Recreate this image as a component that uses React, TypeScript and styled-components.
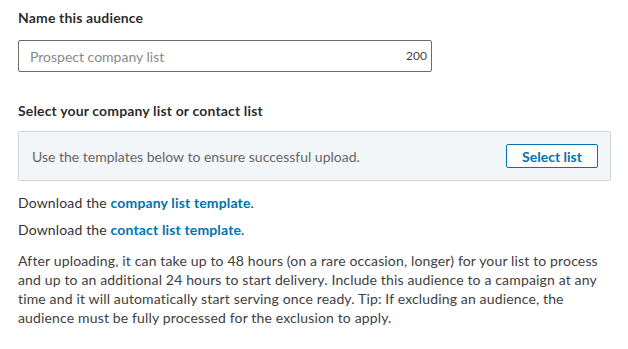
import styled, { createGlobalStyle } from "styled-components";

const GlobalStyle = createGlobalStyle`
  body {
    margin: 0;
    background: #ffffff;
    font-family: Lato, "Open Sans", sans-serif;
    color: #333333;
  }
`;

const Page = styled.div`
  width: 593px;
  padding: 8px 0 0 18px;
  font-size: 14px;
  line-height: 19px;
  letter-spacing: 0.15px;
`;

const Label = styled.div<{ $gap: number }>`
  font-weight: 700;
  color: rgba(0, 0, 0, 0.85);
  margin-bottom: ${(p) => p.$gap}px;
`;

const Field = styled.div`
  position: relative;
  width: 414px;
  margin-bottom: 29px;
`;

const TextInput = styled.input`
  box-sizing: border-box;
  width: 100%;
  height: 32px;
  padding: 0 36px 0 11px;
  border: 1px solid #6b6b6b;
  border-radius: 2px;
  font: inherit;
  font-size: 14px;
  color: #333333;
  outline: none;

  &::placeholder {
    color: #8a8a8a;
  }
`;

const Counter = styled.span`
  position: absolute;
  right: 5px;
  top: 8px;
  font-size: 12px;
  line-height: 16px;
  letter-spacing: 0;
  color: #444444;
`;

const UploadBox = styled.div`
  box-sizing: border-box;
  height: 50px;
  display: flex;
  align-items: center;
  justify-content: space-between;
  padding: 0 12px 0 13px;
  background: #f3f6f8;
  border: 1px solid #d3d6d9;
  border-radius: 2px;
  margin-bottom: 12px;
  color: #666666;
  letter-spacing: 0;
`;

const OutlineButton = styled.button`
  box-sizing: border-box;
  width: 92px;
  height: 24px;
  padding: 0;
  background: #ffffff;
  border: 1px solid #0073b1;
  border-radius: 2px;
  font: inherit;
  font-weight: 700;
  color: #0073b1;
  cursor: pointer;
`;

const Line = styled.p<{ $gap: number }>`
  margin: 0 0 ${(p) => p.$gap}px;
`;

const Link = styled.a`
  color: #0073b1;
  font-weight: 700;
  text-decoration: none;
`;

const Note = styled.p`
  margin: 0;
  color: #404040;
`;

export default function App() {
  return (
    <>
      <GlobalStyle />
      <Page>
        <Label $gap={13}>Name this audience</Label>
        <Field>
          <TextInput placeholder="Prospect company list" />
          <Counter>200</Counter>
        </Field>
        <Label $gap={11}>Select your company list or contact list</Label>
        <UploadBox>
          <span>Use the templates below to ensure successful upload.</span>
          <OutlineButton>Select list</OutlineButton>
        </UploadBox>
        <Line $gap={8}>
          Download the <Link href="#">company list template</Link>.
        </Line>
        <Line $gap={12}>
          Download the <Link href="#">contact list template</Link>.
        </Line>
        <Note>
          After uploading, it can take up to 48 hours (on a rare occasion,
          longer) for your list to process and up to an additional 24 hours to
          start delivery. Include this audience to a campaign at any time and it
          will automatically start serving once ready. Tip: If excluding an
          audience, the audience must be fully processed for the exclusion to
          apply.
        </Note>
      </Page>
    </>
  );
}
